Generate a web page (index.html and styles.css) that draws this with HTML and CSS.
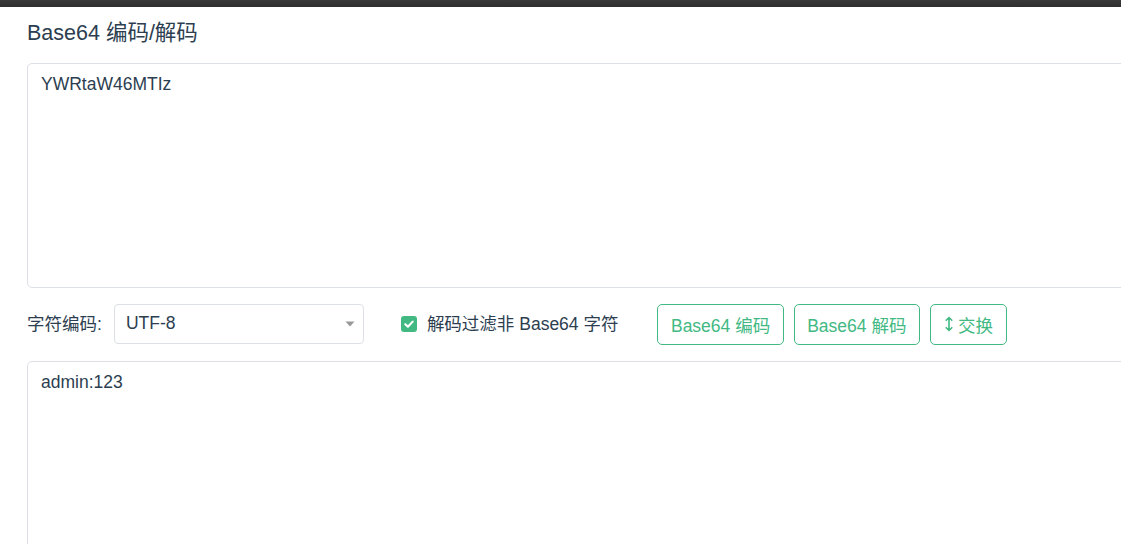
FILE: index.html
```html
<!DOCTYPE html>
<html lang="zh-CN">
<head>
<meta charset="utf-8">
<title>Base64 编码/解码</title>
<link rel="stylesheet" href="styles.css">
</head>
<body>
<div class="topbar"></div>
<main class="page">
  <h1 class="title">Base64 编码/解码</h1>
  <textarea class="box box-top" spellcheck="false">YWRtaW46MTIz</textarea>
  <div class="controls">
    <span class="field-label">字符编码:</span>
    <div class="select">
      <span class="select-value">UTF-8</span>
      <svg class="select-arrow" width="10" height="6" viewBox="0 0 10 6"><path d="M0.5 0.5 H9.5 L5 5.5 Z" fill="#999"/></svg>
    </div>
    <label class="check">
      <span class="checkbox"><svg width="16" height="16" viewBox="0 0 16 16"><path d="M4.3 8.2 L6.9 10.7 L11.7 5.6" fill="none" stroke="#fff" stroke-width="2.1" stroke-linecap="round" stroke-linejoin="round"/></svg></span>
      <span>解码过滤非 Base64 字符</span>
    </label>
    <div class="buttons">
      <button class="btn">Base64 编码</button>
      <button class="btn">Base64 解码</button>
      <button class="btn btn-swap"><svg class="swap-icon" width="8" height="16" viewBox="0 0 8 16"><path d="M4 1.5 V14.5 M1.2 4.3 L4 1.5 L6.8 4.3 M1.2 11.7 L4 14.5 L6.8 11.7" fill="none" stroke="#42b983" stroke-width="1.6" stroke-linecap="round" stroke-linejoin="round"/></svg>交换</button>
    </div>
  </div>
  <textarea class="box box-bottom" spellcheck="false">admin:123</textarea>
</main>
</body>
</html>
```
FILE: styles.css
```css
html, body {
  margin: 0;
  padding: 0;
  overflow: hidden;
  background: #fff;
}
body {
  font-family: "Liberation Sans", "Noto Sans CJK SC", sans-serif;
  color: #2c3e50;
}
.topbar {
  height: 7px;
  background: linear-gradient(#3a3a3a, #2e2e2e);
}
.page {
  padding: 11px 0 0 27px;
  width: 1140px;
}
.title {
  margin: 0;
  font-size: 21.5px;
  font-weight: normal;
  line-height: 30px;
  color: #2c3e50;
}
.box {
  display: block;
  box-sizing: border-box;
  width: 1140px;
  margin: 14.5px 0 0 0;
  padding: 7px 13px 6px;
  border: 1px solid #dcdfe6;
  border-radius: 5px;
  font-family: "Liberation Sans", "Noto Sans CJK SC", sans-serif;
  font-size: 17.5px;
  line-height: 26px;
  color: #2c3e50;
  resize: none;
  outline: none;
  background: #fff;
}
.box-top {
  height: 225px;
}
.box-bottom {
  height: 240px;
  margin-top: 16px;
}
.controls {
  display: flex;
  align-items: center;
  height: 41px;
  margin-top: 16px;
  font-size: 17.5px;
}
.field-label {
  margin-right: 12px;
  line-height: 24px;
}
.select {
  box-sizing: border-box;
  width: 250px;
  height: 40px;
  border: 1px solid #dcdfe6;
  border-radius: 4px;
  display: flex;
  align-items: center;
  justify-content: space-between;
  padding: 0 8px 0 11px;
  margin-top: -1px;
}
.select-arrow {
  display: block;
}
.check {
  display: flex;
  align-items: center;
  gap: 10px;
  margin-left: 37px;
  line-height: 24px;
}
.checkbox {
  width: 16px;
  height: 16px;
  border-radius: 3px;
  background: #42b983;
  display: flex;
}
.buttons {
  display: flex;
  gap: 10px;
  margin-left: 39px;
}
.btn {
  box-sizing: border-box;
  height: 41px;
  padding: 0 12.5px;
  border: 1px solid #42b983;
  border-radius: 5px;
  background: #fff;
  color: #42b983;
  font-family: "Liberation Sans", "Noto Sans CJK SC", sans-serif;
  font-size: 17.5px;
  display: flex;
  align-items: center;
}
.btn-swap {
  padding: 0 13px 0 14px;
}
.swap-icon {
  display: block;
  margin-right: 5px;
}
```
